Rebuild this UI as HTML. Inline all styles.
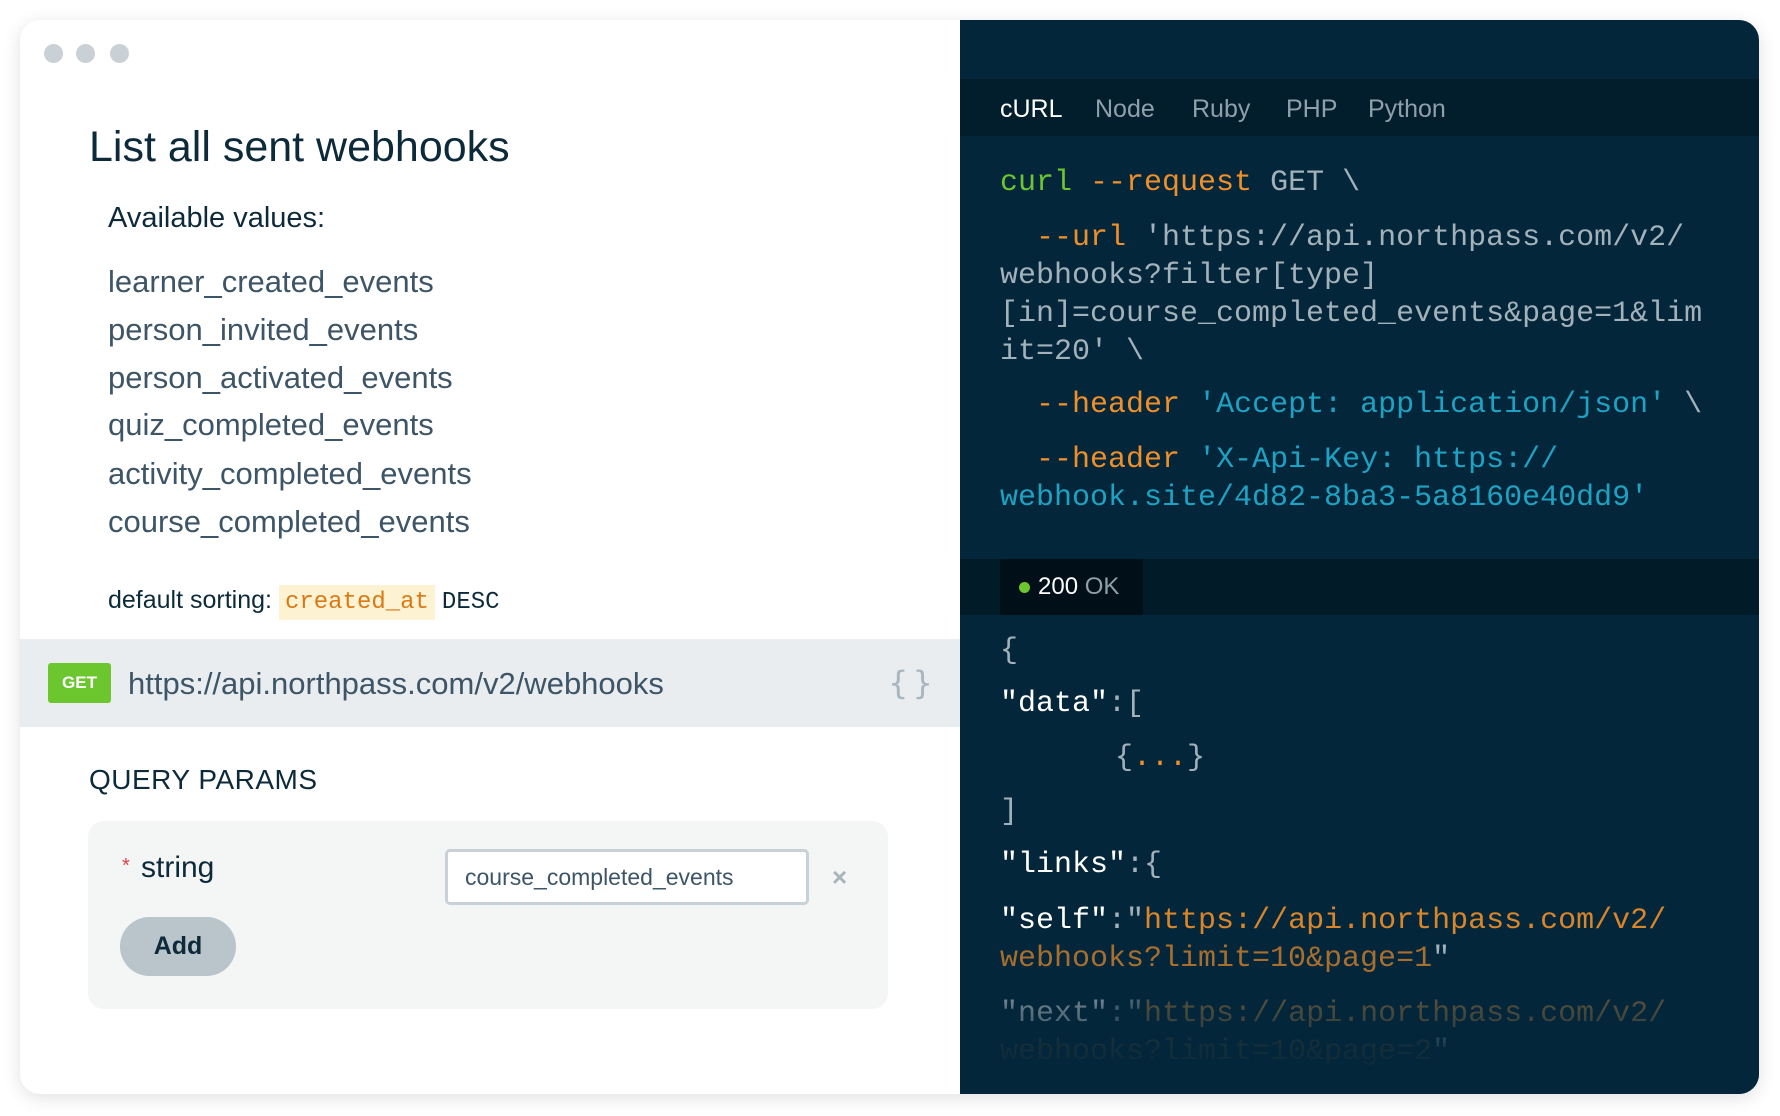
<!DOCTYPE html>
<html><head><meta charset="utf-8"><style>
*{margin:0;padding:0;box-sizing:border-box}
body{width:1780px;height:1116px;background:#fff;position:relative;overflow:hidden;font-family:"Liberation Sans",sans-serif}
.abs{position:absolute;white-space:nowrap}
.card{position:absolute;left:20px;top:20px;width:1739px;height:1074px;border-radius:20px;background:#fff;box-shadow:0 4px 18px rgba(0,0,0,.12);overflow:hidden}
.dot{position:absolute;top:24px;width:19px;height:19px;border-radius:50%;background:#c9d0d6}
.li{position:absolute;left:108px;font-size:31px;color:#3d5566;white-space:nowrap}
.mono{font-family:"Liberation Mono",monospace}
.dark{position:absolute;left:960px;top:20px;width:799px;height:1074px;background:#03263a;border-radius:0 20px 20px 0;overflow:hidden}
.code{position:absolute;left:40px;font-family:"Liberation Mono",monospace;font-size:30px;white-space:pre;color:#a3b1ba}
.g{color:#6cc72f}.o{color:#ef8f2a}.t{color:#1ea2c3}.w{color:#fff}
</style></head><body>
<div class="card">
  <div class="dot" style="left:24px"></div><div class="dot" style="left:56px"></div><div class="dot" style="left:90px"></div>
  <div class="abs" style="left:69px;top:103px;font-size:43px;color:#0d2a3a">List all sent webhooks</div>
  <div class="abs" style="left:88px;top:182px;font-size:29px;color:#0d2a3a">Available values:</div>
  <div class="li" style="left:88px;top:244px">learner_created_events</div>
  <div class="li" style="left:88px;top:292px">person_invited_events</div>
  <div class="li" style="left:88px;top:340px">person_activated_events</div>
  <div class="li" style="left:88px;top:387px">quiz_completed_events</div>
  <div class="li" style="left:88px;top:436px">activity_completed_events</div>
  <div class="li" style="left:88px;top:484px">course_completed_events</div>
  <div class="abs" style="left:88px;top:566px;font-size:25px;color:#0d2a3a">default sorting: <span class="mono" style="background:#fdf2d2;color:#d97a16;padding:4px 6px;font-size:24px">created_at</span> <span class="mono" style="font-size:24px">DESC</span></div>
  <div class="abs" style="left:0;top:619px;width:940px;height:88px;background:#e9edf0"></div>
  <div class="abs" style="left:28px;top:643px;width:63px;height:40px;background:#6cc72f;border-radius:3px;color:#fff;font-weight:bold;font-size:17px;text-align:center;line-height:40px">GET</div>
  <div class="abs" style="left:108px;top:646px;font-size:31px;color:#3d5566">https://api.northpass.com/v2/webhooks</div>
  <div class="abs" style="left:868px;top:644px;font-size:32px;color:#aab6bf;font-family:'DejaVu Sans',sans-serif;letter-spacing:-3px">{ }</div>
  <div class="abs" style="left:69px;top:744px;font-size:28px;color:#0d2a3a;letter-spacing:.5px">QUERY PARAMS</div>
  <div class="abs" style="left:68px;top:801px;width:800px;height:188px;background:#f4f5f5;border-radius:16px"></div>
  <div class="abs" style="left:102px;top:835px;font-size:20px;color:#e0404a">*</div>
  <div class="abs" style="left:121px;top:831px;font-size:30px;color:#0d2a3a">string</div>
  <div class="abs" style="left:425px;top:829px;width:364px;height:56px;border:3px solid #c9d0d6;border-radius:5px;background:#fff;font-size:23px;color:#3d5566;padding-left:17px;line-height:50px">course_completed_events</div>
  <div class="abs" style="left:812px;top:842px;font-size:26px;color:#aab4bc;font-weight:bold">×</div>
  <div class="abs" style="left:100px;top:897px;width:116px;height:59px;background:#b9c4cb;border-radius:30px;font-size:25px;font-weight:bold;color:#0d2a3a;text-align:center;line-height:59px">Add</div>
</div>
<div class="dark">
  <div class="abs" style="left:0;top:59px;width:799px;height:57px;background:#021e2d"></div>
  <div class="abs" style="left:40px;top:75px;font-size:25px;color:#fff">cURL</div>
  <div class="abs" style="left:135px;top:75px;font-size:25px;color:#8fa0ab">Node</div>
  <div class="abs" style="left:232px;top:75px;font-size:25px;color:#8fa0ab">Ruby</div>
  <div class="abs" style="left:326px;top:75px;font-size:25px;color:#8fa0ab">PHP</div>
  <div class="abs" style="left:408px;top:75px;font-size:25px;color:#8fa0ab">Python</div>
  <div class="code" style="top:146px"><span class="g">curl</span> <span class="o">--request</span> GET \</div>
  <div class="code" style="top:199px;line-height:38px">  <span class="o">--url</span> 'https://api.northpass.com/v2/
webhooks?filter[type]
[in]=course_completed_events&amp;page=1&amp;lim
it=20' \</div>
  <div class="code" style="top:368px">  <span class="o">--header</span> <span class="t">'Accept: application/json'</span> \</div>
  <div class="code" style="top:421px;line-height:38px">  <span class="o">--header</span> <span class="t">'X-Api-Key: https://
webhook.site/4d82-8ba3-5a8160e40dd9'</span></div>
  <div class="abs" style="left:0;top:539px;width:799px;height:56px;background:#011b28"></div>
  <div class="abs" style="left:40px;top:539px;width:143px;height:56px;background:#000f18"></div>
  <div class="abs" style="left:59px;top:562px;width:11px;height:11px;border-radius:50%;background:#6cc72f"></div>
  <div class="abs" style="left:78px;top:553px;font-size:24px;color:#fff">200 <span style="color:#8fa0ab">OK</span></div>
  <div class="code" style="top:614px">{</div>
  <div class="code" style="top:667px"><span class="w">"data"</span>:[</div>
  <div class="code" style="top:721px;left:155px">{<span class="o">...</span>}</div>
  <div class="code" style="top:775px">]</div>
  <div class="code" style="top:828px"><span class="w">"links"</span>:{</div>
  <div class="code" style="top:882px;line-height:38px"><span class="w">"self"</span>:"<span style="color:#d98529">https://api.northpass.com/v2/</span>
<span style="color:#a86e2e">webhooks?limit=10&amp;page=1</span>"</div>
  <div class="code" style="top:975px;line-height:38px;color:#5c6f7b"><span style="color:#8a98a2">"next"</span>:"<span style="color:#6b5a3c">https://api.northpass.com/v2/</span>
<span style="color:#3a3f38">webhooks?limit=10&amp;page=2</span>"</div>
  <div class="abs" style="left:0;top:960px;width:799px;height:114px;background:linear-gradient(rgba(3,38,58,0) 0%,rgba(3,38,58,.55) 45%,#03263a 90%)"></div>
</div>
</body></html>
